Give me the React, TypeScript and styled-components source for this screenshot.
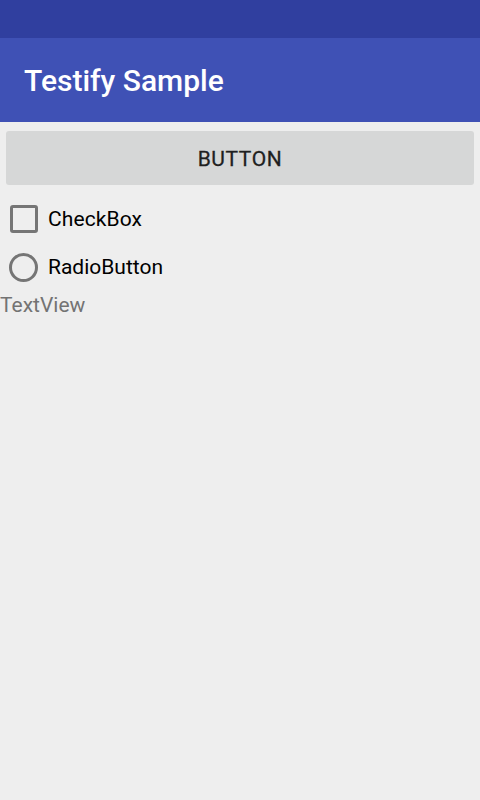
import React from "react";
import styled, { createGlobalStyle } from "styled-components";

const Global = createGlobalStyle`
  html, body { margin: 0; padding: 0; background: #eeeeee; }
  body { font-family: Roboto, "Noto Sans", sans-serif; }
`;

const Page = styled.div`
  width: 480px;
  height: 800px;
  background: #eeeeee;
  display: flex;
  flex-direction: column;
`;

const StatusBar = styled.div`
  height: 38px;
  background: #303f9f;
`;

const Toolbar = styled.div`
  height: 84px;
  background: #3f51b5;
  display: flex;
  align-items: center;
  padding-left: 24px;
  box-sizing: border-box;
`;

const Title = styled.div`
  color: #ffffff;
  font-size: 30px;
  font-weight: 500;
  letter-spacing: 0;
`;

const Content = styled.div`
  display: flex;
  flex-direction: column;
  padding-top: 9px;
`;

const Button = styled.div`
  margin: 0 6px;
  height: 54px;
  padding-top: 2px;
  box-sizing: border-box;
  background: #d6d7d7;
  border-radius: 3px;
  display: flex;
  align-items: center;
  justify-content: center;
  font-size: 21px;
  font-weight: 400;
  color: #1f1f1f;
  letter-spacing: 0.6px;
  -webkit-text-stroke: 0.3px #1f1f1f;
`;

const Row = styled.div`
  height: 48px;
  display: flex;
  align-items: center;
  padding-left: 9px;
  gap: 10px;
  font-size: 21px;
  color: #000000;
`;

const FirstRow = styled(Row)`
  margin-top: 10px;
`;

const Box = styled.div`
  width: 22px;
  height: 22px;
  margin-left: 1px;
  border: 3px solid #757575;
  border-radius: 3px;
`;

const Radio = styled.div`
  width: 23px;
  height: 23px;
  border: 3px solid #757575;
  border-radius: 50%;
`;

const Label = styled.span<{ $spacing: number }>`
  line-height: 1;
  letter-spacing: ${(p) => p.$spacing}px;
`;

const TextView = styled.div`
  font-size: 21px;
  color: #737373;
  line-height: 28px;
`;

export default function App() {
  return (
    <Page>
      <Global />
      <StatusBar />
      <Toolbar>
        <Title>Testify Sample</Title>
      </Toolbar>
      <Content>
        <Button>BUTTON</Button>
        <FirstRow>
          <Box />
          <Label $spacing={0.1}>CheckBox</Label>
        </FirstRow>
        <Row>
          <Radio />
          <Label $spacing={0}>RadioButton</Label>
        </Row>
        <TextView>TextView</TextView>
      </Content>
    </Page>
  );
}
